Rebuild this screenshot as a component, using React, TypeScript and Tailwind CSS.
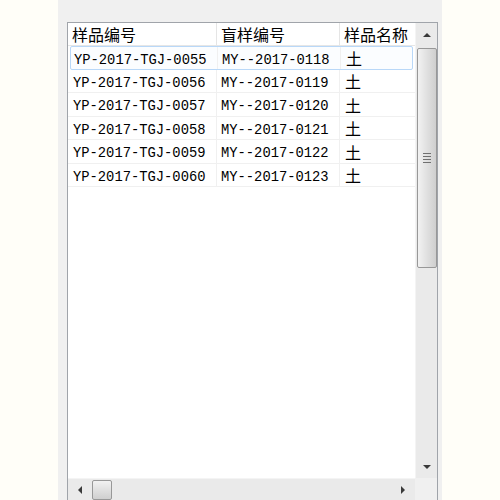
import React from 'react';

const rows = [
  { code: 'YP-2017-TGJ-0055', blind: 'MY--2017-0118', name: '土' },
  { code: 'YP-2017-TGJ-0056', blind: 'MY--2017-0119', name: '土' },
  { code: 'YP-2017-TGJ-0057', blind: 'MY--2017-0120', name: '土' },
  { code: 'YP-2017-TGJ-0058', blind: 'MY--2017-0121', name: '土' },
  { code: 'YP-2017-TGJ-0059', blind: 'MY--2017-0122', name: '土' },
  { code: 'YP-2017-TGJ-0060', blind: 'MY--2017-0123', name: '土' },
];

const cjk = "font-['SimSun','Noto_Sans_CJK_SC',sans-serif] text-[16px] text-black";
const mono = "font-['Liberation_Mono','Noto_Sans_CJK_SC',monospace] text-[13.8px] text-black pt-[7px]";

function Arrow({ dir }: { dir: 'up' | 'down' | 'left' | 'right' }) {
  const pts = {
    up: '0,4 4,0 8,4',
    down: '0,0 8,0 4,4',
    left: '4,0 4,8 0,4',
    right: '0,0 0,8 4,4',
  }[dir];
  const w = dir === 'up' || dir === 'down' ? 8 : 4;
  const h = dir === 'up' || dir === 'down' ? 4 : 8;
  return (
    <svg width={w} height={h} viewBox={`0 0 ${w} ${h}`}>
      <polygon points={pts} fill="#3a3a3a" />
    </svg>
  );
}

export default function App() {
  return (
    <div className="w-[500px] h-[500px] bg-[#fffef8] flex">
      <div className="ml-[58px] w-[384px] h-full bg-[#f0f0f0] pt-[22px] pl-[9px] pr-[4px]">
        <div className="h-full border border-b-0 border-[#a0a4aa] bg-white flex flex-col">
          <div className="flex flex-1 min-h-0">
            <div className="flex-1 flex flex-col">
              <div className="flex h-[23px] items-center border-b border-[#e6e6e6]">
                <div className={`w-[149px] h-full pl-[4px] flex items-center border-r border-[#e5e5e5] ${cjk}`}>样品编号</div>
                <div className={`w-[123px] h-full pl-[4px] flex items-center border-r border-[#e5e5e5] ${cjk}`}>盲样编号</div>
                <div className={`flex-1 h-full pl-[4px] flex items-center ${cjk}`}>样品名称</div>
              </div>
              {rows.map((r, i) => (
                <div
                  key={r.code}
                  className={`flex h-[23.5px] items-center ${
                    i === 0 ? 'mx-[2px] border border-[#b9d8f8] rounded-[2px] bg-[#fbfdff]' : 'border-b border-[#f0f0f0]'
                  }`}
                >
                  <div className={`${i === 0 ? 'w-[147px] pl-[3px]' : 'w-[149px] pl-[5px]'} h-full flex items-center border-r border-[#f0f0f0] ${mono}`}>{r.code}</div>
                  <div className={`w-[123px] h-full pl-[4px] flex items-center border-r border-[#f0f0f0] ${mono}`}>{r.blind}</div>
                  <div className={`flex-1 h-full pl-[5px] pt-[1px] flex items-center ${cjk}`}>{r.name}</div>
                </div>
              ))}
            </div>
            <div className="w-[22px] bg-[#eaeaea] flex flex-col items-center border-l border-[#f4f4f4]">
              <div className="h-[24px] w-full flex items-center justify-center">
                <Arrow dir="up" />
              </div>
              <div className="w-[20px] h-[220px] mt-[1px] rounded-[2px] border border-[#989898] bg-gradient-to-r from-[#f2f2f2] via-[#e0e0e0] to-[#cfcfcf] flex items-center justify-center">
                <div className="flex flex-col gap-[2px]">
                  <div className="w-[8px] h-[1px] bg-[#707070]" />
                  <div className="w-[8px] h-[1px] bg-[#707070]" />
                  <div className="w-[8px] h-[1px] bg-[#707070]" />
                  <div className="w-[8px] h-[1px] bg-[#707070]" />
                </div>
              </div>
              <div className="flex-1" />
              <div className="h-[23px] w-full flex items-center justify-center">
                <Arrow dir="down" />
              </div>
            </div>
          </div>
          <div className="flex h-[22px]">
            <div className="flex-1 bg-[#eaeaea] border-t border-[#f4f4f4] flex items-center">
              <div className="w-[24px] h-full flex items-center justify-center">
                <Arrow dir="left" />
              </div>
              <div className="w-[20px] h-[20px] rounded-[2px] border border-[#989898] bg-gradient-to-b from-[#f2f2f2] via-[#e0e0e0] to-[#cfcfcf]" />
              <div className="flex-1" />
              <div className="w-[24px] h-full flex items-center justify-center">
                <Arrow dir="right" />
              </div>
            </div>
            <div className="w-[22px] bg-[#f0f0f0]" />
          </div>
        </div>
      </div>
    </div>
  );
}
